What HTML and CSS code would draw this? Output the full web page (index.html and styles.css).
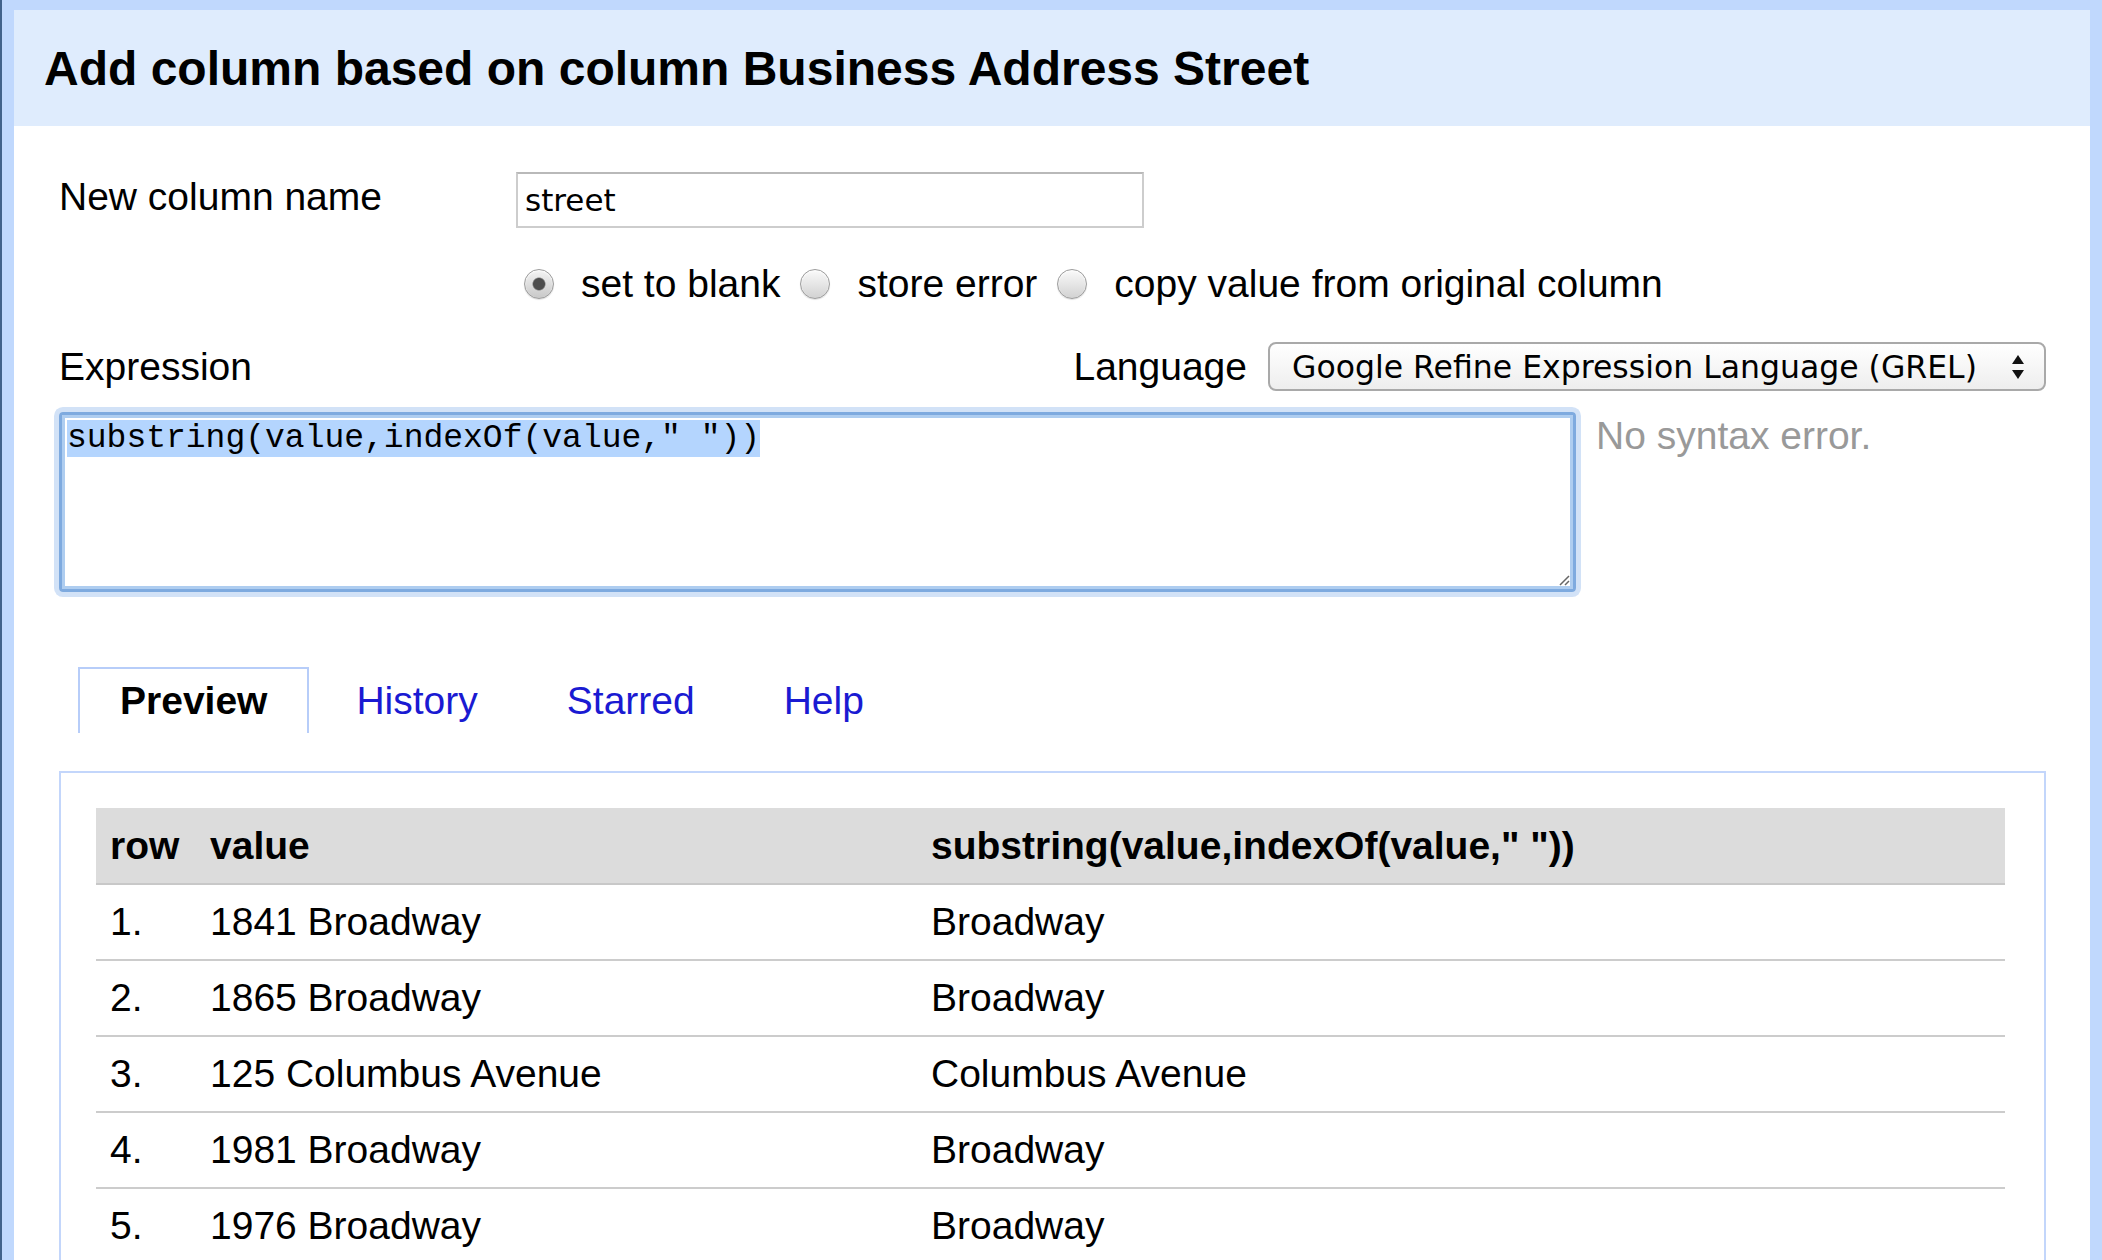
FILE: index.html
```html
<!DOCTYPE html>
<html>
<head>
<meta charset="utf-8">
<title>Add column</title>
<link rel="stylesheet" href="styles.css">
</head>
<body>
<div class="dialog">
  <div class="dialog-header">Add column based on column Business Address Street</div>
  <div class="dialog-body">
    <div class="row name-row">
      <div class="label-name">New column name</div>
      <div class="text-input">street</div>
    </div>
    <div class="row radio-row">
      <label class="radio-opt"><span class="radio checked"></span>set to blank</label>
      <label class="radio-opt"><span class="radio"></span>store error</label>
      <label class="radio-opt"><span class="radio"></span>copy value from original column</label>
    </div>
    <div class="row lang-row">
      <div>Expression</div>
      <div class="lang">
        <span>Language</span>
        <div class="select">
          <span>Google Refine Expression Language (GREL)</span>
          <svg class="arrows" width="14" height="28" viewBox="0 0 14 28"><path d="M7 2 L13 11 L1 11 Z" fill="#111"/><path d="M1 17 L13 17 L7 26 Z" fill="#111"/></svg>
        </div>
      </div>
    </div>
    <div class="row expr-row">
      <div class="textarea"><span class="sel">substring(value,indexOf(value," "))</span><svg class="grip" width="12" height="12" viewBox="0 0 12 12"><path d="M11 2 L2 11 M11 7 L7 11" stroke="#666" stroke-width="1.5"/></svg></div>
      <div class="status">No syntax error.</div>
    </div>
    <div class="tabs">
      <div class="tab active">Preview</div>
      <div class="tab">History</div>
      <div class="tab">Starred</div>
      <div class="tab">Help</div>
    </div>
    <div class="panel">
      <table>
        <colgroup><col class="c-row"><col class="c-val"><col></colgroup>
        <thead>
          <tr><th>row</th><th>value</th><th>substring(value,indexOf(value," "))</th></tr>
        </thead>
        <tbody>
          <tr><td>1.</td><td>1841 Broadway</td><td>Broadway</td></tr>
          <tr><td>2.</td><td>1865 Broadway</td><td>Broadway</td></tr>
          <tr><td>3.</td><td>125 Columbus Avenue</td><td>Columbus Avenue</td></tr>
          <tr><td>4.</td><td>1981 Broadway</td><td>Broadway</td></tr>
          <tr><td>5.</td><td>1976 Broadway</td><td>Broadway</td></tr>
        </tbody>
      </table>
    </div>
  </div>
</div>
</body>
</html>
```
FILE: styles.css
```css
html, body {
  margin: 0;
  height: 100%;
}
body {
  background: #c0d8fd;
  border-left: 2px solid #41628b;
  box-sizing: border-box;
  padding: 10px 12px 0 12px;
  overflow: hidden;
  font-family: "Liberation Sans", Arial, Helvetica, sans-serif;
  font-size: 39px;
  color: #000;
}
.dialog {
  background: #fff;
  height: 1250px;
}
.dialog-header {
  background: #dfecfd;
  height: 116px;
  display: flex;
  align-items: center;
  padding-left: 30px;
  font-size: 48px;
  font-weight: bold;
}
.dialog-body {
  padding: 0 44px 0 45px;
}
.row {
  display: flex;
  align-items: center;
}
.name-row {
  margin-top: 46px;
  height: 56px;
}
.label-name {
  width: 457px;
  margin-top: -6px;
}
.text-input {
  box-sizing: border-box;
  width: 628px;
  height: 56px;
  border: 2px solid #cdcdcd;
  border-top-color: #b9b9b9;
  padding-left: 7px;
  font-family: "DejaVu Sans", sans-serif;
  font-size: 31px;
  display: flex;
  align-items: center;
}
.radio-row {
  margin-top: 36px;
  height: 40px;
  padding-left: 465px;
}
.radio-opt {
  display: flex;
  align-items: center;
  margin-right: 20px;
}
.radio {
  box-sizing: border-box;
  width: 30px;
  height: 30px;
  border-radius: 50%;
  border: 1px solid #9c9c9c;
  background: linear-gradient(#fafafa, #d2d2d2);
  margin-right: 27px;
  box-shadow: inset 0 1px 2px rgba(255,255,255,0.9), 0 1px 1px rgba(0,0,0,0.12);
}
.radio.checked {
  background: radial-gradient(circle, #4d4d4d 0, #4d4d4d 5.5px, rgba(77,77,77,0) 7px), linear-gradient(#f4f4f4, #c8c8c8);
}
.lang-row {
  margin-top: 38px;
  height: 49px;
  justify-content: space-between;
}
.lang {
  display: flex;
  align-items: center;
  gap: 21px;
}
.select {
  box-sizing: border-box;
  width: 778px;
  height: 49px;
  border: 2px solid #a9a9a9;
  border-radius: 8px;
  background: linear-gradient(#ffffff, #eeeeee);
  display: flex;
  align-items: center;
  justify-content: space-between;
  padding: 0 19px 0 22px;
  font-family: "DejaVu Sans", sans-serif;
  font-size: 31.5px;
}
.arrows {
  display: block;
}
.expr-row {
  margin-top: 21px;
  align-items: flex-start;
}
.textarea {
  position: relative;
  box-sizing: border-box;
  width: 1517px;
  height: 180px;
  border: 3px solid #7eaadf;
  border-radius: 4px;
  box-shadow: 0 0 0 5px #d2e2f7, inset 0 0 0 3px #aecdf0;
  padding: 6px 5px 4px 5px;
  font-family: "Liberation Mono", "Courier New", monospace;
  font-size: 33px;
  line-height: 36px;
}
.sel {
  background: #b4d5fe;
}
.grip {
  position: absolute;
  right: 3px;
  bottom: 3px;
}
.status {
  margin-left: 20px;
  color: #999;
  line-height: 48px;
}
.tabs {
  display: flex;
  margin-top: 75px;
  padding-left: 19px;
  gap: 5px;
}
.tab {
  border: 2px solid transparent;
  border-bottom: 0;
  padding: 0 40px;
  line-height: 64px;
  color: #1a1ad2;
}
.tab.active {
  border-color: #b7cdf9;
  color: #000;
  font-weight: bold;
}
.panel {
  margin-top: 38px;
  border: 2px solid #c3d6fb;
  padding: 35px 39px 0 35px;
  height: 700px;
}
table {
  width: 100%;
  border-collapse: collapse;
  table-layout: fixed;
}
.c-row { width: 100px; }
.c-val { width: 721px; }
th {
  background: #dcdcdc;
  height: 75px;
  text-align: left;
  padding: 0 0 0 14px;
  border-bottom: 2px solid #c8c8c8;
  font-weight: bold;
}
td {
  height: 74px;
  padding: 0 0 0 14px;
  border-bottom: 2px solid #cccccc;
}
```
